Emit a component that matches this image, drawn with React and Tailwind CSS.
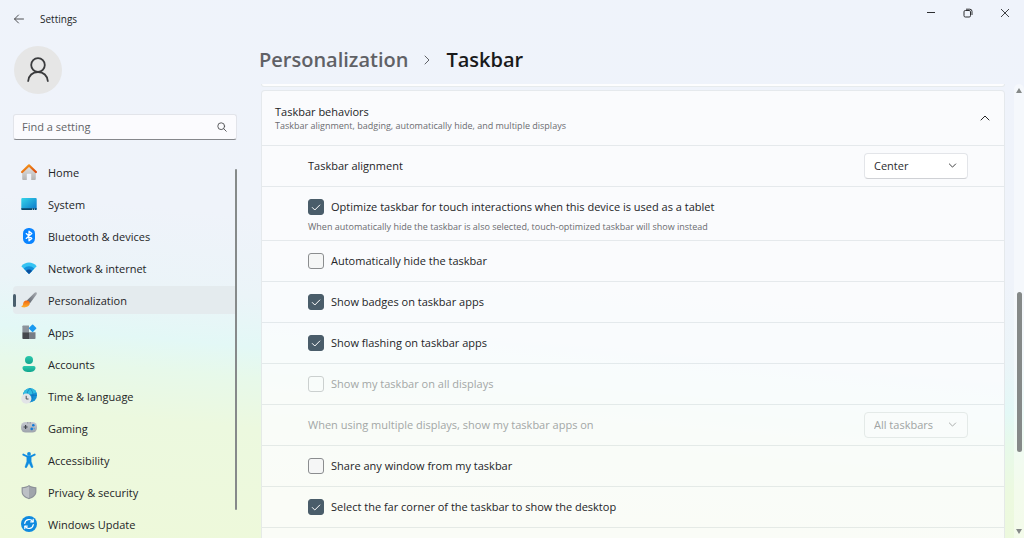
import { useState } from 'react';

function HomeIcon() {
  return (
    <svg viewBox="0 0 16 16" className="h-4 w-4">
      <defs>
        <linearGradient id="homeWall" x1="0" y1="0" x2="0" y2="1">
          <stop offset="0" stopColor="#e4e4e4" />
          <stop offset="1" stopColor="#b4b4b4" />
        </linearGradient>
        <linearGradient id="homeRoof" x1="0" y1="0" x2="1" y2="1">
          <stop offset="0" stopColor="#f9a01b" />
          <stop offset="1" stopColor="#d9480f" />
        </linearGradient>
      </defs>
      <path d="M1.200 7.500 8 1.800l6.800 5.700V15a.9.9 0 0 1-.9.9H10.200V10.300a.6.6 0 0 0-.6-.6H6.400a.6.6 0 0 0-.6.6v5.600H2.100A.9.9 0 0 1 1.200 15Z" fill="url(#homeWall)" />
      <path d="M1.100 8 8 1.400 14.900 8" fill="none" stroke="url(#homeRoof)" strokeWidth="2.200" strokeLinecap="round" strokeLinejoin="round" />
    </svg>
  );
}

function SystemIcon() {
  return (
    <svg viewBox="0 0 16 16" className="h-4 w-4">
      <defs>
        <linearGradient id="screen" x1="0" y1="0" x2="1" y2="1">
          <stop offset="0" stopColor="#35d6ea" />
          <stop offset="1" stopColor="#0a74c9" />
        </linearGradient>
      </defs>
      <rect x=".3" y="2" width="15.400" height="12" rx="1" fill="url(#screen)" />
      <path d="M.3 12.300h15.400V13a1 1 0 0 1-1 1H1.300a1 1 0 0 1-1-1Z" fill="#0b4668" />
      <path d="M11 13.200h1M13 13.200h1" stroke="#d6f1fb" strokeWidth=".9" />
    </svg>
  );
}

function BluetoothIcon() {
  return (
    <svg viewBox="0 0 16 16" className="h-4 w-4">
      <rect x="2" y="0" width="12" height="16" rx="5.500" fill="#0a84ff" />
      <path d="m5.200 5.600 5.600 4.800L8 12.800V3.200l2.800 2.400-5.600 4.800" fill="none" stroke="#fff" strokeWidth="1.300" strokeLinejoin="round" strokeLinecap="round" />
    </svg>
  );
}

function NetworkIcon() {
  return (
    <svg viewBox="0 0 16 16" className="h-4 w-4">
      <path d="M.3 6.200C4.500 1.400 11.500 1.400 15.700 6.200L8 14Z" fill="#35c3f3" />
      <path d="M2.700 8.600C5.500 5.300 10.500 5.300 13.300 8.600L8 14Z" fill="#148fdb" />
      <path d="M5 10.900c1.600-1.900 4.400-1.900 6 0L8 14Z" fill="#0b4f9c" />
    </svg>
  );
}

function BrushIcon() {
  return (
    <svg viewBox="0 0 16 16" className="h-4 w-4">
      <defs>
        <linearGradient id="handle" x1="1" y1="0" x2="0" y2="1">
          <stop offset="0" stopColor="#a9adb3" />
          <stop offset="1" stopColor="#5d636b" />
        </linearGradient>
        <linearGradient id="bristle" x1="0" y1="0" x2="0" y2="1">
          <stop offset="0" stopColor="#f0660f" />
          <stop offset="1" stopColor="#ffb22e" />
        </linearGradient>
      </defs>
      <path d="M15.500.5c.6.500.4 1.300 0 1.900L9 11.300 5.800 8.400 13.600.8c.6-.6 1.400-.7 1.900-.3Z" fill="url(#handle)" />
      <path d="M5.900 8.600c1.600 0 3 1.300 2.900 3-.2 3.100-4.900 4.800-8 3.400-.5-.2-.4-.7 0-.9 1.800-.8.8-1.900 1.700-3.700.6-1.200 1.900-1.800 3.400-1.800Z" fill="url(#bristle)" />
    </svg>
  );
}

function AppsIcon() {
  return (
    <svg viewBox="0 0 16 16" className="h-4 w-4">
      <path d="M2.200 1.500H8v6.700H1.400V2.300a.8.800 0 0 1 .8-.8Z" fill="#8c939b" />
      <path d="M1.400 8.200H8V15H2.200a.8.800 0 0 1-.8-.8Z" fill="#45484d" />
      <path d="M8 8.200h6.500v6a.8.800 0 0 1-.8.800H8Z" fill="#777d85" />
      <rect x="8.700" y="1.300" width="5.800" height="5.800" rx=".8" transform="rotate(45 11.600 4.200)" fill="#1a9af0" />
    </svg>
  );
}

function AccountsIcon() {
  return (
    <svg viewBox="0 0 16 16" className="h-4 w-4">
      <defs>
        <linearGradient id="person" x1="0" y1="0" x2="0" y2="1">
          <stop offset="0" stopColor="#2cc9ad" />
          <stop offset="1" stopColor="#10a58e" />
        </linearGradient>
      </defs>
      <circle cx="8" cy="4" r="4" fill="url(#person)" />
      <path d="M3.200 10h9.600a1.700 1.700 0 0 1 1.700 1.700C14.500 14.400 12 16 8 16s-6.500-1.600-6.500-4.300A1.700 1.700 0 0 1 3.200 10Z" fill="url(#person)" />
    </svg>
  );
}

function TimeIcon() {
  return (
    <svg viewBox="0 0 16 16" className="h-4 w-4">
      <circle cx="9" cy="7.300" r="7" fill="#1590d4" />
      <path d="M2.200 6C3 2.700 5.700.4 9 .3c3 0 5.300 1.600 6.400 4C12 6.500 6 7.500 2.200 6Z" fill="#30bde0" />
      <path d="M9 .3c-4 4-4 9 0 14M9 .3c4 4 4 9 0 14M2.200 7.300h13.600" fill="none" stroke="#0b6cb5" strokeWidth=".6" />
      <circle cx="5.300" cy="10.700" r="5.100" fill="#e2e4e7" />
      <path d="M5.200 7.800v3.200h2.300" fill="none" stroke="#4b5056" strokeWidth="1" />
    </svg>
  );
}

function GamingIcon() {
  return (
    <svg viewBox="0 0 16 16" className="h-4 w-4">
      <defs>
        <linearGradient id="pad" x1="0" y1="0" x2="0" y2="1">
          <stop offset="0" stopColor="#c6cad0" />
          <stop offset="1" stopColor="#9da3ab" />
        </linearGradient>
      </defs>
      <rect x="0" y="2" width="16" height="10.500" rx="4.600" fill="url(#pad)" />
      <path d="M4.600 5v4M2.600 7h4" stroke="#3f444b" strokeWidth="1.200" />
      <path d="M6.300 2.900h1M8.700 2.900h1" stroke="#555b63" strokeWidth=".8" />
      <circle cx="12.300" cy="5.200" r="1.300" fill="#0f7bd8" />
      <circle cx="10.700" cy="8.900" r="1.300" fill="#0f7bd8" />
      <circle cx="13.200" cy="8.600" r=".8" fill="#5ea6e0" />
    </svg>
  );
}

function AccessibilityIcon() {
  return (
    <svg viewBox="0 0 16 16" className="h-4 w-4">
      <circle cx="8" cy="1.900" r="1.900" fill="#0f8de0" />
      <path d="M2.300 2.600 6.200 4.500h3.600l3.900-1.900M8 5v4.500" fill="none" stroke="#0f8de0" strokeWidth="1.900" strokeLinecap="round" strokeLinejoin="round" />
      <path d="M5.800 4.500h4.400v5l1.700 5a.9.9 0 0 1-1.700.7L8 11l-2.200 4.200a.9.9 0 0 1-1.700-.7l1.700-5Z" fill="#0f8de0" stroke="#0f8de0" strokeWidth=".4" />
    </svg>
  );
}

function ShieldIcon() {
  return (
    <svg viewBox="0 0 16 16" className="h-4 w-4">
      <path d="M8 1C6.300 2.300 3.800 3.100.6 3.200v4.600c0 3.600 3 6.100 7.400 7.400 4.400-1.300 7.400-3.800 7.400-7.400V3.200C12.200 3.100 9.700 2.300 8 1Z" fill="#8b9097" />
      <path d="M8 2.200C6.200 3.400 4.200 4 1.700 4.200v3.600c0 3 2.600 5 6.300 6.300Z" fill="#bcc0c5" />
      <path d="M8 2.200c1.800 1.200 3.800 1.800 6.300 2v3.600c0 3-2.600 5-6.300 6.300Z" fill="#a0a5ab" />
    </svg>
  );
}

function UpdateIcon() {
  return (
    <svg viewBox="0 0 16 16" className="h-4 w-4">
      <circle cx="8" cy="8" r="8" fill="#0f8adf" />
      <path d="M3.700 7.300A4.400 4.400 0 0 1 11.800 5.600M12.300 8.700A4.400 4.400 0 0 1 4.200 10.400" fill="none" stroke="#fff" strokeWidth="1.200" strokeLinecap="round" />
      <path d="M12.200 3.400v2.500H9.700M3.800 12.600v-2.500h2.500" fill="none" stroke="#fff" strokeWidth="1.200" strokeLinecap="round" strokeLinejoin="round" />
    </svg>
  );
}

const navItems = [
  { label: 'Home', icon: HomeIcon },
  { label: 'System', icon: SystemIcon },
  { label: 'Bluetooth & devices', icon: BluetoothIcon },
  { label: 'Network & internet', icon: NetworkIcon },
  { label: 'Personalization', icon: BrushIcon },
  { label: 'Apps', icon: AppsIcon },
  { label: 'Accounts', icon: AccountsIcon },
  { label: 'Time & language', icon: TimeIcon },
  { label: 'Gaming', icon: GamingIcon },
  { label: 'Accessibility', icon: AccessibilityIcon },
  { label: 'Privacy & security', icon: ShieldIcon },
  { label: 'Windows Update', icon: UpdateIcon },
];

function Chevron({ d, className }) {
  return (
    <svg viewBox="0 0 10 10" className={className} fill="none" stroke="currentColor" strokeLinecap="round" strokeLinejoin="round">
      <path d={d} />
    </svg>
  );
}

function TitleBar() {
  return (
    <header className="flex shrink-0 items-start justify-between">
      <div className="flex h-[38px] items-center gap-4 pl-[14px]">
        <button type="button" aria-label="Back" className="text-[#3c3d40]">
          <svg viewBox="0 0 10 10" className="h-[10px] w-[10px]" fill="none" stroke="currentColor" strokeWidth=".9" strokeLinecap="round" strokeLinejoin="round">
            <path d="M9.500 5H.6M4.500 1 .5 5l4 4" />
          </svg>
        </button>
        <span className="text-[10px]">Settings</span>
      </div>
      <div className="flex pr-px text-[#2d2e31]">
        <button type="button" aria-label="Minimize" className="flex h-[26px] w-[37px] items-center justify-center">
          <svg viewBox="0 0 10 10" className="h-[10px] w-[10px]" stroke="currentColor"><path d="M1 4.500h8" /></svg>
        </button>
        <button type="button" aria-label="Restore" className="flex h-[26px] w-[37px] items-center justify-center">
          <svg viewBox="0 0 10 10" className="h-[10px] w-[10px]" fill="none" stroke="currentColor">
            <rect x="1" y="2.500" width="6.500" height="6.500" rx="1.300" />
            <path d="M3 1.200h3.800a2.200 2.200 0 0 1 2.200 2.200V7" />
          </svg>
        </button>
        <button type="button" aria-label="Close" className="flex h-[26px] w-[37px] items-center justify-center">
          <svg viewBox="0 0 10 10" className="h-[10px] w-[10px]" stroke="currentColor" strokeWidth=".9"><path d="m1 1 8 8M9 1 1 9" /></svg>
        </button>
      </div>
    </header>
  );
}

function Sidebar() {
  return (
    <aside className="flex w-[237px] shrink-0 flex-col pt-2 pl-[13px]">
      <div className="ml-px flex h-12 w-12 shrink-0 items-center justify-center rounded-full bg-[#e6e6e6]">
        <svg viewBox="0 0 24 26" className="h-[26px] w-6" fill="none" stroke="#3a3b3d" strokeWidth="1.800" strokeLinecap="round">
          <circle cx="12" cy="8" r="6.800" />
          <path d="M2.200 24C2.600 18.700 6.500 15 12 15s9.400 3.700 9.800 9" />
        </svg>
      </div>
      <div className="mt-5 flex h-[26px] shrink-0 items-center rounded-[3px] border border-[#e2e4ea] border-b-[#85878b] bg-[#fbfbfe] pr-[9px] pl-2">
        <input
          type="text"
          aria-label="Find a setting"
          placeholder="Find a setting"
          className="min-w-0 flex-1 bg-transparent text-[11px] outline-none placeholder:text-[#636468]"
        />
        <svg viewBox="0 0 10 10" className="h-[10px] w-[10px]" fill="none" stroke="#4c4d50" strokeWidth=".9" strokeLinecap="round">
          <circle cx="4.200" cy="4.200" r="3.400" />
          <path d="m6.800 6.800 2.500 2.500" />
        </svg>
      </div>
      <div className="mt-[18px] flex min-h-0 flex-1 overflow-hidden">
        <nav className="flex flex-1 flex-col gap-1">
          {navItems.map(({ label, icon: Icon }) => (
            <a
              key={label}
              href="#"
              aria-current={label === 'Personalization' ? 'page' : undefined}
              className="group flex h-7 shrink-0 items-center rounded-l-[4px] aria-[current=page]:bg-[#e4ebee]"
            >
              <span className="mr-[5px] h-[13px] w-[3px] rounded-full group-aria-[current=page]:bg-[#4a5f6d]" />
              <Icon />
              <span className="ml-[11px] pt-[2px] text-[11px]">{label}</span>
            </a>
          ))}
        </nav>
        <div className="mt-[11px] mb-7 w-[2px] rounded-full bg-[#868a8a]" />
      </div>
    </aside>
  );
}

function Row({ children }) {
  return <div className="flex h-[41px] items-center border-t border-[#2d505a]/10 pr-9 pl-[46px]">{children}</div>;
}

function CheckOption({ label, defaultChecked = false, disabled = false }) {
  const [checked, setChecked] = useState(defaultChecked);

  return (
    <label className="flex items-center gap-[7px] has-disabled:text-[#a3a7a6]">
      <span className="relative flex h-4 w-4">
        <input
          type="checkbox"
          checked={checked}
          disabled={disabled}
          onChange={e => setChecked(e.target.checked)}
          className="peer h-4 w-4 appearance-none rounded-[3px] border border-[#8b8d8f] bg-[#f5f6f6] checked:border-[#4a5d6a] checked:bg-[#4a5d6a] disabled:border-[#cbd0cf] disabled:bg-transparent"
        />
        <svg
          viewBox="0 0 16 16"
          className="pointer-events-none absolute inset-0 hidden h-4 w-4 peer-checked:block"
          fill="none"
          stroke="#fff"
          strokeLinecap="round"
          strokeLinejoin="round"
        >
          <path d="m4.300 8.500 2.500 2.500 5-5" />
        </svg>
      </span>
      <span>{label}</span>
    </label>
  );
}

function SelectOption({ id, label, options, disabled = false }) {
  return (
    <>
      <label htmlFor={id} className={disabled ? 'flex-1 text-[#a3a7a6]' : 'flex-1'}>{label}</label>
      <span className={disabled ? 'relative flex text-[#a0a4a3]' : 'relative flex text-[#2b2c2e]'}>
        <select
          id={id}
          disabled={disabled}
          className="h-[26px] w-[104px] appearance-none rounded-[4px] border border-[#e3e5e9] border-b-[#cfd1d5] bg-white px-[9px] disabled:border-[#e4eae8] disabled:bg-white/20 disabled:opacity-100"
        >
          {options.map(o => (
            <option key={o}>{o}</option>
          ))}
        </select>
        <Chevron d="m1.500 3.300 3.500 3.500 3.500-3.500" className="pointer-events-none absolute top-2 right-[11px] h-[9px] w-[9px]" />
      </span>
    </>
  );
}

function TaskbarBehaviors() {
  return (
    <section className="rounded-t-[4px] border border-[#2d505a]/10 bg-[#fdfdfe]/80 text-[11px]">
      <button type="button" aria-expanded="true" className="flex h-[54px] w-full items-center justify-between pr-[14px] pl-[13px] text-left">
        <span className="flex flex-col">
          <span className="leading-[14px]">Taskbar behaviors</span>
          <span className="text-[9px] leading-[13px] text-[#6b6c70]">
            Taskbar alignment, badging, automatically hide, and multiple displays
          </span>
        </span>
        <Chevron d="M1 7 5 3l4 4" className="h-[10px] w-[10px]" />
      </button>
      <Row>
        <SelectOption id="alignment" label="Taskbar alignment" options={['Center', 'Left']} />
      </Row>
      <div className="flex h-[54px] flex-col justify-center gap-[5px] border-t border-[#2d505a]/10 pt-[6px] pl-[46px]">
        <CheckOption label="Optimize taskbar for touch interactions when this device is used as a tablet" defaultChecked />
        <p className="text-[9px] leading-[14px] text-[#6b6c70]">
          When automatically hide the taskbar is also selected, touch-optimized taskbar will show instead
        </p>
      </div>
      <Row><CheckOption label="Automatically hide the taskbar" /></Row>
      <Row><CheckOption label="Show badges on taskbar apps" defaultChecked /></Row>
      <Row><CheckOption label="Show flashing on taskbar apps" defaultChecked /></Row>
      <Row><CheckOption label="Show my taskbar on all displays" disabled /></Row>
      <Row>
        <SelectOption
          id="displays"
          label="When using multiple displays, show my taskbar apps on"
          options={['All taskbars']}
          disabled
        />
      </Row>
      <Row><CheckOption label="Share any window from my taskbar" /></Row>
      <Row><CheckOption label="Select the far corner of the taskbar to show the desktop" defaultChecked /></Row>
      <Row />
    </section>
  );
}

export default function App() {
  return (
    <div className="flex h-screen flex-col overflow-hidden bg-[linear-gradient(185deg,#eff3fb_0%,#eff3fa_45%,#ebf4f8_58%,#e3f8f6_66%,#e7f9ea_71%,#ecf9df_79%,#eef9da_100%)] font-['Open_Sans','Noto_Sans',sans-serif] text-[#242527]">
      <TitleBar />
      <div className="flex min-h-0 flex-1">
        <Sidebar />
        <main className="flex min-w-0 flex-1 flex-col pl-[22px]">
          <h1 className="flex h-[46px] shrink-0 items-center pb-[2px] text-[20px] font-semibold">
            <a href="#" className="text-[#606166]">Personalization</a>
            <Chevron d="m3 1 4 4-4 4" className="mx-[14px] h-[10px] w-[10px] text-[#606166]" />
            <span className="text-[#1a1a1b]">Taskbar</span>
          </h1>
          <div className="flex min-h-0 flex-1">
            <div className="ml-[2px] flex min-w-0 flex-1 flex-col gap-[3px] overflow-hidden">
              {/* bottom edge of the card scrolled out above */}
              <div className="h-[3px] shrink-0 rounded-b-[4px] border border-t-0 border-[#2d505a]/10 bg-[#fdfdfe]" />
              <TaskbarBehaviors />
            </div>
            {/* scrollbar */}
            <div className="ml-[9px] flex w-[10px] flex-col items-center rounded-t-md bg-white/40 py-1 text-[#858988]">
              <svg viewBox="0 0 6 5" className="h-[5px] w-[6px]" fill="currentColor"><path d="M3 0 6 5H0Z" /></svg>
              <div className="flex w-full grow flex-col items-center">
                <div className="grow-[13]" />
                <div className="h-40 w-[5px] rounded-full bg-[#858988]" />
                <div className="grow-[5]" />
              </div>
              <svg viewBox="0 0 6 5" className="h-[5px] w-[6px]" fill="currentColor"><path d="M0 0h6L3 5Z" /></svg>
            </div>
          </div>
        </main>
      </div>
    </div>
  );
}
